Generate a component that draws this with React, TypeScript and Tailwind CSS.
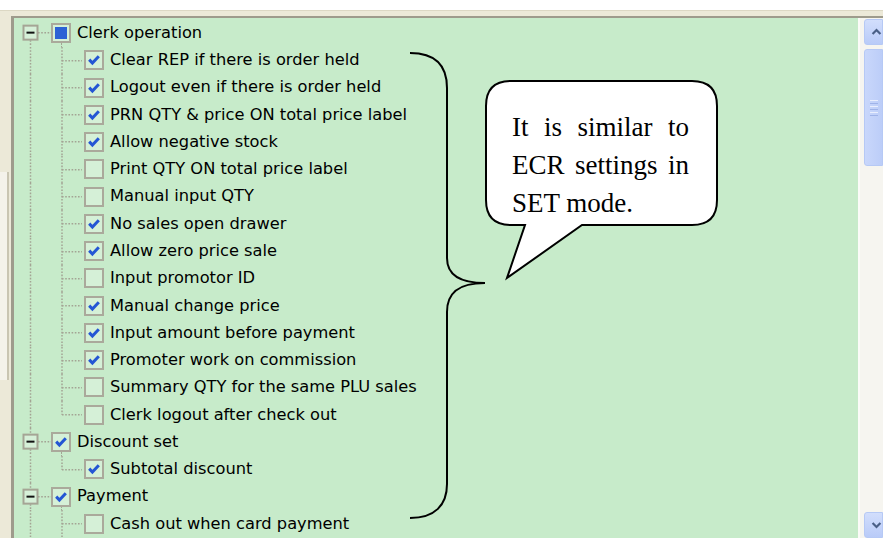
import React from "react";

type Child = { label: string; state: "checked" | "unchecked" };
type Root = { label: string; state: "checked" | "unchecked" | "mixed"; children: Child[] };

const tree: Root[] = [
  {
    label: "Clerk operation",
    state: "mixed",
    children: [
      { label: "Clear REP if there is order held", state: "checked" },
      { label: "Logout even if there is order held", state: "checked" },
      { label: "PRN QTY & price ON total price label", state: "checked" },
      { label: "Allow negative stock", state: "checked" },
      { label: "Print QTY ON total price label", state: "unchecked" },
      { label: "Manual input QTY", state: "unchecked" },
      { label: "No sales open drawer", state: "checked" },
      { label: "Allow zero price sale", state: "checked" },
      { label: "Input promotor ID", state: "unchecked" },
      { label: "Manual change price", state: "checked" },
      { label: "Input amount before payment", state: "checked" },
      { label: "Promoter work on commission", state: "checked" },
      { label: "Summary QTY for the same PLU sales", state: "unchecked" },
      { label: "Clerk logout after check out", state: "unchecked" },
    ],
  },
  {
    label: "Discount set",
    state: "checked",
    children: [{ label: "Subtotal discount", state: "checked" }],
  },
  {
    label: "Payment",
    state: "checked",
    children: [{ label: "Cash out when card payment", state: "unchecked" }],
  },
];

const H = 27.28;
const CY = H / 2;
const DOT = "#a3a494";

function Checkbox({ state }: { state: "checked" | "unchecked" | "mixed" }) {
  return (
    <div className="w-[20px] h-[20px] shrink-0 border-2 border-[#aaa99b] bg-[#d5f0d7] flex items-center justify-center">
      {state === "checked" && (
        <svg width="16" height="16" viewBox="0 0 16 16">
          <polyline points="3.2,7.6 6.4,11 12.8,4.2" fill="none" stroke="#2456d4" strokeWidth="3" />
        </svg>
      )}
      {state === "mixed" && <div className="w-[12px] h-[12px] bg-[#2c62d5]" />}
    </div>
  );
}

function Label({ text }: { text: string }) {
  return (
    <span
      className="ml-[6px] whitespace-nowrap text-[16.25px] leading-none text-black"
      style={{ fontFamily: '"DejaVu Sans", Verdana, sans-serif' }}
    >
      {text}
    </span>
  );
}

function RootRow({ root, first }: { root: Root; first: boolean }) {
  return (
    <div className="flex items-center h-[27.28px]">
      <svg width="37" height={H} className="shrink-0">
        {!first && <line x1="16.5" y1="0" x2="16.5" y2={CY - 7.5} stroke={DOT} strokeWidth="1.5" strokeDasharray="1.6 1.6" />}
        <line x1="16.5" y1={CY + 7.5} x2="16.5" y2={H} stroke={DOT} strokeWidth="1.5" strokeDasharray="1.6 1.6" />
        <line x1="24" y1={CY} x2="37" y2={CY} stroke={DOT} strokeWidth="1.5" strokeDasharray="1.6 1.6" />
        <rect x="9.5" y={CY - 7} width="14" height="14" fill="#d6f0d8" stroke="#a5a595" strokeWidth="2" />
        <line x1="12.5" y1={CY} x2="20.5" y2={CY} stroke="#111" strokeWidth="2" />
      </svg>
      <div className="flex flex-col w-[20px] h-full shrink-0">
        <div className="flex-1" />
        <Checkbox state={root.state} />
        <div className="flex-1 ml-[10px] border-l border-dotted border-[#a3a494]" />
      </div>
      <Label text={root.label} />
    </div>
  );
}

function ChildRow({ child, last }: { child: Child; last: boolean }) {
  return (
    <div className="flex items-center h-[27.28px]">
      <svg width="70" height={H} className="shrink-0">
        <line x1="16.5" y1="0" x2="16.5" y2={H} stroke={DOT} strokeWidth="1.5" strokeDasharray="1.6 1.6" />
        <line x1="48" y1="0" x2="48" y2={last ? CY : H} stroke={DOT} strokeWidth="1.5" strokeDasharray="1.6 1.6" />
        <line x1="48" y1={CY} x2="68" y2={CY} stroke={DOT} strokeWidth="1.5" strokeDasharray="1.6 1.6" />
      </svg>
      <Checkbox state={child.state} />
      <Label text={child.label} />
    </div>
  );
}

function ScrollButton({ up }: { up: boolean }) {
  return (
    <div className="h-[26px] ml-[4px] rounded-l-[3px] border border-[#b6c9f5] bg-gradient-to-b from-[#d2defc] to-[#b9cbf8] flex items-center pl-[6px]">
      <svg width="14" height="10" viewBox="0 0 14 10">
        <polyline
          points={up ? "2,7.5 7,2.5 12,7.5" : "2,2.5 7,7.5 12,2.5"}
          fill="none"
          stroke="#4a5f86"
          strokeWidth="2.8"
        />
      </svg>
    </div>
  );
}

export default function App() {
  return (
    <div className="relative w-[883px] h-[538px] bg-white pt-[10px] overflow-hidden">
      <div className="h-full bg-[#ece9d8] border-t border-[#dcd8c4] flex">
        <div className="w-[11px] shrink-0 flex flex-col">
          <div className="h-[161px]" />
          <div className="h-[208px] w-[9px] bg-[#f4f2ea] border-r-2 border-[#c9c5b2]" />
          <div className="flex-1" />
        </div>
        <div className="flex-1 pt-[5px]">
          <div className="h-full flex border-l-[3px] border-t-[2px] border-[#9e9b8c]">
            <div className="flex-1 bg-[#c7ebca] pt-[1.4px]">
              {tree.map((root, ri) => (
                <div key={root.label}>
                  <RootRow root={root} first={ri === 0} />
                  {root.children.map((c, ci) => (
                    <ChildRow key={c.label} child={c} last={ri < tree.length - 1 && ci === root.children.length - 1} />
                  ))}
                </div>
              ))}
            </div>
            <div className="w-[25px] shrink-0 bg-[#f6f5f0] border-l-2 border-[#fbfbf8] flex flex-col pt-[1px]">
              <ScrollButton up={true} />
              <div className="h-[117px] mt-[4px] ml-[4px] rounded-l-[3px] border border-[#b6c9f5] bg-gradient-to-r from-[#c9d7fb] to-[#bccdf8] flex flex-col justify-center pl-[5px] gap-[2px]">
                <div className="w-[8px] h-[1px] bg-[#e9eefd]" />
                <div className="w-[8px] h-[1px] bg-[#9fb3e8]" />
                <div className="w-[8px] h-[1px] bg-[#e9eefd]" />
                <div className="w-[8px] h-[1px] bg-[#9fb3e8]" />
                <div className="w-[8px] h-[1px] bg-[#e9eefd]" />
                <div className="w-[8px] h-[1px] bg-[#9fb3e8]" />
              </div>
              <div className="flex-1" />
              <ScrollButton up={false} />
            </div>
          </div>
        </div>
      </div>

      <svg className="absolute left-0 top-0 pointer-events-none" width="883" height="538">
        <path
          d="M410,53 C435,53 447,65 447,88 L447,258 C447,274 458,283 485,283 C458,283 447,293 447,312 L447,484 C447,505 435,518 410,518"
          fill="none"
          stroke="#000"
          strokeWidth="2"
        />
        <path
          d="M511,81 H692 Q717,81 717,106 V200 Q717,225 692,225 H582 L507,278 L525,225 H511 Q486,225 486,200 V106 Q486,81 511,81 Z"
          fill="#fff"
          stroke="#000"
          strokeWidth="2"
        />
      </svg>
      <div
        className="absolute left-[512px] top-[108px] w-[177px] text-[27px] leading-[38px] text-black text-justify"
        style={{ fontFamily: '"Liberation Serif", "Times New Roman", serif' }}
      >
        It is similar to ECR settings in SET mode.
      </div>
    </div>
  );
}
